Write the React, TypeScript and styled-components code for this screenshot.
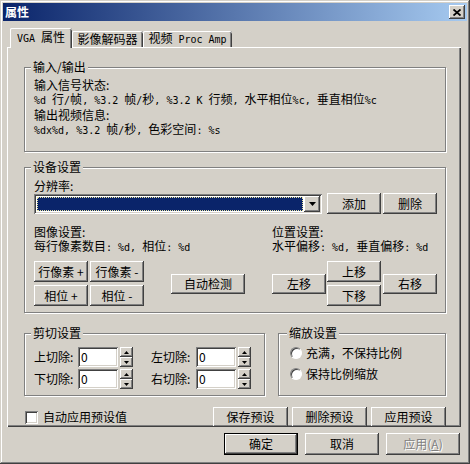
import React from 'react';
import styled, { createGlobalStyle, css } from 'styled-components';

const face = '#d4d0c8';
const shadow = '#808080';
const dark = '#404040';
const light = '#ffffff';

const GlobalStyle = createGlobalStyle`
  html, body {
    margin: 0;
    padding: 0;
    background: ${face};
  }
  body {
    font-family: "Noto Sans CJK SC", "DejaVu Sans", sans-serif;
    font-size: 12px;
    color: #000;
  }
`;

const raised = css`
  box-shadow: inset -1px -1px ${dark}, inset 1px 1px ${light},
    inset -2px -2px ${shadow}, inset 2px 2px ${face};
`;

const sunken = css`
  box-shadow: inset 1px 1px ${shadow}, inset -1px -1px ${light},
    inset 2px 2px ${dark}, inset -2px -2px ${face};
`;

const Window = styled.div`
  box-sizing: border-box;
  width: 470px;
  height: 464px;
  padding: 3px;
  background: ${face};
  box-shadow: inset -1px -1px ${dark}, inset 1px 1px ${face},
    inset -2px -2px ${shadow}, inset 2px 2px ${light};
  display: flex;
  flex-direction: column;
`;

const TitleBar = styled.div`
  height: 18px;
  display: flex;
  align-items: center;
  justify-content: space-between;
  padding: 0 2px 0 2px;
  background: linear-gradient(to right, #0a246a, #a6caf0);
  color: #fff;
  font-weight: bold;
  font-size: 12px;
  line-height: 18px;
`;

const CloseButton = styled.div`
  box-sizing: border-box;
  width: 16px;
  height: 14px;
  background: ${face};
  display: flex;
  align-items: center;
  justify-content: center;
  ${raised}
`;

const Body = styled.div`
  flex: 1;
  display: flex;
  flex-direction: column;
  padding: 7px 6px 0 4px;
`;

const TabStrip = styled.div`
  position: relative;
  z-index: 1;
  height: 19px;
  display: flex;
  align-items: flex-end;
  padding-left: 3px;
`;

const Tab = styled.div<{ $w: number; $active?: boolean }>`
  box-sizing: border-box;
  width: ${p => p.$w}px;
  height: ${p => (p.$active ? 20 : 16)}px;
  margin-bottom: ${p => (p.$active ? -1 : 0)}px;
  background: ${face};
  border-radius: 2px 2px 0 0;
  display: flex;
  align-items: center;
  justify-content: center;
  line-height: 14px;
  white-space: pre;
  box-shadow: inset 1px 0 ${light}, inset 0 1px ${light}, inset -1px 0 ${dark},
    inset -2px 0 ${shadow};
`;

const Panel = styled.div`
  box-sizing: border-box;
  height: 380px;
  padding: 13px 15px 0 17px;
  display: flex;
  flex-direction: column;
  box-shadow: inset 1px 1px ${light}, inset -1px -1px ${dark},
    inset -2px -2px ${shadow};
`;

const Group = styled.fieldset<{ $gap?: number; $w?: number; $pl?: number }>`
  box-sizing: border-box;
  margin: 0 0 ${p => p.$gap ?? 0}px 0;
  padding: 0 8px 6px ${p => p.$pl ?? 9}px;
  min-width: 0;
  ${p => (p.$w ? `width: ${p.$w}px;` : 'flex: 1;')}
  border: 1px solid ${shadow};
  box-shadow: 1px 1px 0 ${light}, inset 1px 1px 0 ${light};
`;

const Legend = styled.legend`
  margin-left: -3px;
  padding: 0 2px;
  line-height: 14px;
  background: ${face};
`;

const Line = styled.div<{ $top?: number; $grow?: boolean }>`
  line-height: 14px;
  height: 14px;
  white-space: pre;
  margin-top: ${p => p.$top ?? 0}px;
  ${p => p.$grow && 'flex: 1;'}
`;

const Latin = styled.span`
  font-family: "DejaVu Sans Mono", monospace;
  font-size: 10px;
`;

// mono latin runs, like the bitmap font's half-width glyphs
const Mixed: React.FC<{ text: string }> = ({ text }) => (
  <span>
    {text.split(/([\x20-\x7e]+)/).map((part, i) =>
      /^[\x20-\x7e]+$/.test(part) ? <Latin key={i}>{part}</Latin> : part
    )}
  </span>
);

const Row = styled.div<{ $top?: number; $align?: string; $gap?: number; $bottom?: number }>`
  display: flex;
  align-items: ${p => p.$align ?? 'center'};
  margin-top: ${p => p.$top ?? 0}px;
  margin-bottom: ${p => p.$bottom ?? 0}px;
  gap: ${p => p.$gap ?? 0}px;
`;

const Button = styled.button<{ $w?: number; $h?: number; $ml?: number; $default?: boolean }>`
  box-sizing: border-box;
  flex: none;
  width: ${p => p.$w ?? 54}px;
  height: ${p => p.$h ?? 21}px;
  margin: 0 0 0 ${p => p.$ml ?? 0}px;
  padding: 0;
  border: none;
  background: ${face};
  font: inherit;
  line-height: 14px;
  color: #000;
  white-space: pre;
  ${raised}
  ${p =>
    p.$default &&
    css`
      box-shadow: inset 0 0 0 1px #000, inset -2px -2px ${dark},
        inset 2px 2px ${light}, inset -3px -3px ${shadow};
    `}
  &:disabled {
    color: ${shadow};
    text-shadow: 1px 1px ${light};
  }
`;

const Combo = styled.div`
  box-sizing: border-box;
  width: 289px;
  height: 20px;
  padding: 2px;
  background: #fff;
  display: flex;
  ${sunken}
`;

const ComboValue = styled.div`
  flex: 1;
  margin: 1px;
  background: #0a246a;
  outline: 1px dotted #e8e4a0;
  outline-offset: -1px;
`;

const DropButton = styled.div`
  box-sizing: border-box;
  width: 16px;
  height: 16px;
  background: ${face};
  display: flex;
  align-items: center;
  justify-content: center;
  ${raised}
`;

const Columns = styled.div`
  display: flex;
  margin-top: 11px;
`;

const Column = styled.div<{ $w?: number }>`
  display: flex;
  flex-direction: column;
  ${p => (p.$w ? `width: ${p.$w}px;` : 'flex: 1;')}
`;

const PadGrid = styled.div`
  display: grid;
  grid-template-columns: 54px 54px;
  gap: 3px 2px;
`;

const Stack = styled.div<{ $ml?: number }>`
  display: flex;
  flex-direction: column;
  gap: 3px;
  margin-left: ${p => p.$ml ?? 0}px;
`;

const FieldLabel = styled.span<{ $w: number; $ml?: number }>`
  width: ${p => p.$w}px;
  margin-left: ${p => p.$ml ?? 0}px;
  line-height: 14px;
  white-space: nowrap;
`;

const Edit = styled.div`
  box-sizing: border-box;
  width: 40px;
  height: 20px;
  padding: 3px 0 0 3px;
  background: #fff;
  line-height: 14px;
  ${sunken}
`;

const Spin = styled.div`
  display: flex;
  flex-direction: column;
  margin-left: 2px;
`;

const SpinHalf = styled.div`
  box-sizing: border-box;
  width: 13px;
  height: 10px;
  background: ${face};
  display: flex;
  align-items: center;
  justify-content: center;
  ${raised}
`;

const Radio = styled.span`
  box-sizing: border-box;
  width: 12px;
  height: 12px;
  border-radius: 50%;
  background: #fff;
  border: 1px solid;
  border-color: ${shadow} ${light} ${light} ${shadow};
  box-shadow: inset 1px 1px ${dark};
  margin-right: 4px;
`;

const Check = styled.span`
  box-sizing: border-box;
  width: 13px;
  height: 13px;
  margin: 0 5px 0 1px;
  background: #fff;
  ${sunken}
`;

const Footer = styled.div`
  display: flex;
  justify-content: flex-end;
  gap: 7px;
  padding: 6px 1px 0 0;
`;

const Arrow: React.FC<{ up?: boolean; w?: number; h?: number }> = ({ up, w = 7, h = 4 }) => (
  <svg width={w} height={h} viewBox={`0 0 ${w} ${h}`}>
    <path d={up ? `M0 ${h}L${w / 2} 0L${w} ${h}z` : `M0 0H${w}L${w / 2} ${h}z`} fill="#000" />
  </svg>
);

const Spinner = () => (
  <Spin>
    <SpinHalf>
      <Arrow up w={5} h={3} />
    </SpinHalf>
    <SpinHalf>
      <Arrow w={5} h={3} />
    </SpinHalf>
  </Spin>
);

export default function App() {
  return (
    <Window>
      <GlobalStyle />
      <TitleBar>
        <span>属性</span>
        <CloseButton>
          <svg width="8" height="7" viewBox="0 0 8 7">
            <path d="M0.5 0.5L7.5 6.5M7.5 0.5L0.5 6.5" stroke="#000" strokeWidth="1.8" />
          </svg>
        </CloseButton>
      </TitleBar>
      <Body>
        <TabStrip>
          <Tab $w={62} $active>
            <Mixed text="VGA 属性" />
          </Tab>
          <Tab $w={71}>影像解码器</Tab>
          <Tab $w={89}>
            <Mixed text="视频 Proc Amp" />
          </Tab>
        </TabStrip>
        <Panel>
          <Group $gap={8}>
            <Legend>输入/输出</Legend>
            <Line $top={4}>输入信号状态:</Line>
            <Line>
              <Mixed text="%d 行/帧, %3.2 帧/秒, %3.2 K 行频, 水平相位%c, 垂直相位%c" />
            </Line>
            <Line $top={2}>输出视频信息:</Line>
            <Line>
              <Mixed text="%dx%d, %3.2 帧/秒, 色彩空间: %s" />
            </Line>
          </Group>

          <Group $gap={13}>
            <Legend>设备设置</Legend>
            <Line $top={5}>分辨率:</Line>
            <Row $align="flex-end">
              <Combo>
                <ComboValue />
                <DropButton>
                  <Arrow />
                </DropButton>
              </Combo>
              <Button $ml={5}>添加</Button>
              <Button $ml={2}>删除</Button>
            </Row>
            <Columns>
              <Column $w={239}>
                <Line>图像设置:</Line>
                <Line>
                  <Mixed text="每行像素数目: %d, 相位: %d" />
                </Line>
                <Row $top={8}>
                  <PadGrid>
                    <Button>行像素 +</Button>
                    <Button>行像素 -</Button>
                    <Button>相位 +</Button>
                    <Button>相位 -</Button>
                  </PadGrid>
                  <Button $w={74} $h={20} $ml={27}>
                    自动检测
                  </Button>
                </Row>
              </Column>
              <Column>
                <Line>位置设置:</Line>
                <Line>
                  <Mixed text="水平偏移: %d, 垂直偏移: %d" />
                </Line>
                <Row $top={8}>
                  <Button $h={20}>左移</Button>
                  <Stack $ml={1}>
                    <Button>上移</Button>
                    <Button>下移</Button>
                  </Stack>
                  <Button $h={20} $ml={2}>
                    右移
                  </Button>
                </Row>
              </Column>
            </Columns>
          </Group>

          <Row $align="stretch" $gap={13} $bottom={11}>
            <Group $w={241}>
              <Legend>剪切设置</Legend>
              <Row $top={7}>
                <FieldLabel $w={44}>上切除:</FieldLabel>
                <Edit>0</Edit>
                <Spinner />
                <FieldLabel $w={45} $ml={18}>
                  左切除:
                </FieldLabel>
                <Edit>0</Edit>
                <Spinner />
              </Row>
              <Row $top={2}>
                <FieldLabel $w={44}>下切除:</FieldLabel>
                <Edit>0</Edit>
                <Spinner />
                <FieldLabel $w={45} $ml={18}>
                  右切除:
                </FieldLabel>
                <Edit>0</Edit>
                <Spinner />
              </Row>
            </Group>
            <Group $pl={11}>
              <Legend>缩放设置</Legend>
              <Row $top={6}>
                <Radio />
                <Line>充满，不保持比例</Line>
              </Row>
              <Row $top={7}>
                <Radio />
                <Line>保持比例缩放</Line>
              </Row>
            </Group>
          </Row>

          <Row>
            <Check />
            <Line $grow>自动应用预设值</Line>
            <Button $w={75} $h={20}>保存预设</Button>
            <Button $w={75} $h={20} $ml={4}>
              删除预设
            </Button>
            <Button $w={75} $h={20} $ml={4}>
              应用预设
            </Button>
          </Row>
        </Panel>
        <Footer>
          <Button $w={74} $h={22} $default>
            确定
          </Button>
          <Button $w={74} $h={22}>
            取消
          </Button>
          <Button $w={74} $h={22} disabled>
            应用(<u>A</u>)
          </Button>
        </Footer>
      </Body>
    </Window>
  );
}
